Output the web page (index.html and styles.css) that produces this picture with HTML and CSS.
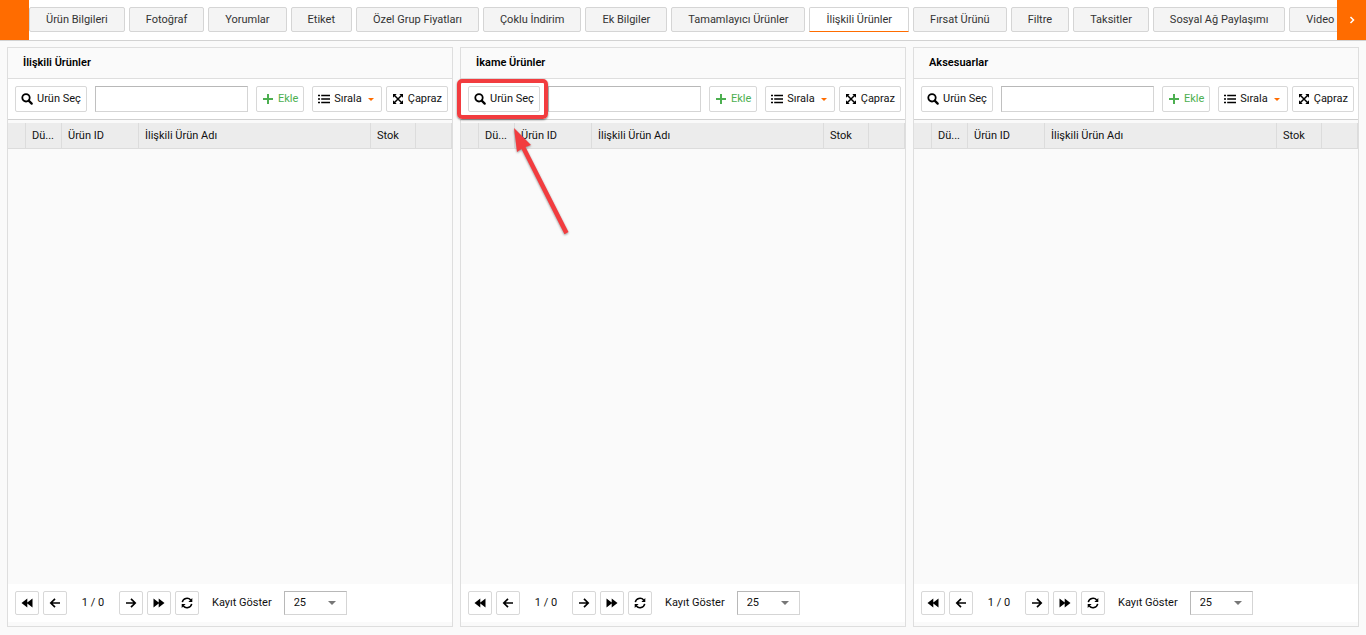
FILE: index.html
```html
<!DOCTYPE html>
<html lang="tr">
<head>
<meta charset="utf-8">
<meta name="viewport" content="width=device-width, initial-scale=1">
<title>İlişkili Ürünler</title>
<link rel="stylesheet" href="styles.css">
</head>
<body>
<svg class="sprite" aria-hidden="true">
  <symbol id="i-search" viewBox="0 0 12 12"><circle cx="5" cy="4.800" r="3.700" fill="none" stroke="currentColor" stroke-width="1.800"/><path d="M7.700 7.600l3 3" stroke="currentColor" stroke-width="2.200" stroke-linecap="round"/></symbol>
  <symbol id="i-plus" viewBox="0 0 12 12"><path d="M6 1v10M1 6h10" stroke="currentColor" stroke-width="2"/></symbol>
  <symbol id="i-list" viewBox="0 0 12 12"><path d="M0 2.500h2M0 6h2M0 9.500h2M3.200 2.500H12M3.200 6H12M3.200 9.500H12" stroke="currentColor" stroke-width="1.500"/></symbol>
  <symbol id="i-cross" viewBox="0 0 12 12"><path d="M2 2l8 8M10 2l-8 8" stroke="currentColor" stroke-width="1.500"/><path d="M1 1h3.700L1 4.700zM11 1v3.700L7.300 1zM1 11V7.300L4.700 11zM11 11H7.300L11 7.300z" fill="currentColor"/></symbol>
  <symbol id="i-caret" viewBox="0 0 8 4"><path d="M0 0h8L4 4z" fill="currentColor"/></symbol>
  <symbol id="i-first" viewBox="0 0 12 12"><path d="M6.300 1.600v8.800L.5 6zM11.500 1.600v8.800L5.700 6z" fill="currentColor"/></symbol>
  <symbol id="i-last" viewBox="0 0 12 12"><path d="M5.700 1.600v8.800L11.500 6zM.5 1.600v8.800L6.300 6z" fill="currentColor"/></symbol>
  <symbol id="i-prev" viewBox="0 0 12 12"><path d="M11 6H2M6 1.800L1.800 6 6 10.200" fill="none" stroke="currentColor" stroke-width="1.700"/></symbol>
  <symbol id="i-next" viewBox="0 0 12 12"><path d="M1 6h9M6 1.800L10.200 6 6 10.200" fill="none" stroke="currentColor" stroke-width="1.700"/></symbol>
  <symbol id="i-refresh" viewBox="0 0 12 12"><path d="M1.300 5.200a4.800 4.800 0 0 1 8.400-2.100M10.700 6.800a4.800 4.800 0 0 1-8.400 2.100" fill="none" stroke="currentColor" stroke-width="1.500"/><path d="M11.300 1v3.900H7.400zM.7 11V7.100h3.900z" fill="currentColor"/></symbol>
  <symbol id="i-chevron" viewBox="0 0 8 8"><path d="M2.500 1l3 3-3 3" fill="none" stroke="currentColor" stroke-width="1.500"/></symbol>
</svg>

<nav class="tabbar" aria-label="Ürün sekmeleri">
  <button class="scroll" type="button" aria-label="Önceki sekmeler"></button>
  <div class="tabs">
    <button class="tab" type="button">Ürün Bilgileri</button>
    <button class="tab" type="button">Fotoğraf</button>
    <button class="tab" type="button">Yorumlar</button>
    <button class="tab" type="button">Etiket</button>
    <button class="tab" type="button">Özel Grup Fiyatları</button>
    <button class="tab" type="button">Çoklu İndirim</button>
    <button class="tab" type="button">Ek Bilgiler</button>
    <button class="tab" type="button">Tamamlayıcı Ürünler</button>
    <button class="tab active" type="button">İlişkili Ürünler</button>
    <button class="tab" type="button">Fırsat Ürünü</button>
    <button class="tab" type="button">Filtre</button>
    <button class="tab" type="button">Taksitler</button>
    <button class="tab" type="button">Sosyal Ağ Paylaşımı</button>
    <button class="tab" type="button">Video</button>
  </div>
  <button class="scroll" type="button" aria-label="Sonraki sekmeler"><svg class="chevron"><use href="#i-chevron"/></svg></button>
</nav>

<main class="panels">
  <section class="panel">
    <h2 class="title">İlişkili Ürünler</h2>
    <div class="toolbar">
      <button class="btn" type="button"><svg class="icon"><use href="#i-search"/></svg>Urün Seç</button>
      <input class="field" type="text" aria-label="Ürün">
      <button class="btn add" type="button"><svg class="icon"><use href="#i-plus"/></svg>Ekle</button>
      <div class="group">
        <button class="btn" type="button"><svg class="icon"><use href="#i-list"/></svg>Sırala<svg class="caret"><use href="#i-caret"/></svg></button>
        <button class="btn" type="button"><svg class="icon"><use href="#i-cross"/></svg>Çapraz</button>
      </div>
    </div>
    <table class="grid">
      <colgroup><col class="c-mark"><col class="c-edit"><col class="c-id"><col><col class="c-stock"><col class="c-end"></colgroup>
      <thead><tr><th></th><th>Dü...</th><th>Ürün ID</th><th>İlişkili Ürün Adı</th><th>Stok</th><th></th></tr></thead>
    </table>
    <div class="pager">
      <button class="page" type="button" aria-label="İlk"><svg class="icon"><use href="#i-first"/></svg></button>
      <button class="page" type="button" aria-label="Önceki"><svg class="icon"><use href="#i-prev"/></svg></button>
      <span class="count">1 / 0</span>
      <button class="page" type="button" aria-label="Sonraki"><svg class="icon"><use href="#i-next"/></svg></button>
      <button class="page" type="button" aria-label="Son"><svg class="icon"><use href="#i-last"/></svg></button>
      <button class="page" type="button" aria-label="Yenile"><svg class="icon"><use href="#i-refresh"/></svg></button>
      <label class="size-label" for="size1">Kayıt Göster</label>
      <div class="size"><select id="size1"><option>25</option></select><svg class="arrow"><use href="#i-caret"/></svg></div>
    </div>
  </section>

  <section class="panel">
    <h2 class="title">İkame Ürünler</h2>
    <div class="toolbar">
      <button class="btn" type="button"><svg class="icon"><use href="#i-search"/></svg>Urün Seç</button>
      <input class="field" type="text" aria-label="Ürün">
      <button class="btn add" type="button"><svg class="icon"><use href="#i-plus"/></svg>Ekle</button>
      <div class="group">
        <button class="btn" type="button"><svg class="icon"><use href="#i-list"/></svg>Sırala<svg class="caret"><use href="#i-caret"/></svg></button>
        <button class="btn" type="button"><svg class="icon"><use href="#i-cross"/></svg>Çapraz</button>
      </div>
    </div>
    <table class="grid">
      <colgroup><col class="c-mark"><col class="c-edit"><col class="c-id"><col><col class="c-stock"><col class="c-end"></colgroup>
      <thead><tr><th></th><th>Dü...</th><th>Ürün ID</th><th>İlişkili Ürün Adı</th><th>Stok</th><th></th></tr></thead>
    </table>
    <div class="pager">
      <button class="page" type="button" aria-label="İlk"><svg class="icon"><use href="#i-first"/></svg></button>
      <button class="page" type="button" aria-label="Önceki"><svg class="icon"><use href="#i-prev"/></svg></button>
      <span class="count">1 / 0</span>
      <button class="page" type="button" aria-label="Sonraki"><svg class="icon"><use href="#i-next"/></svg></button>
      <button class="page" type="button" aria-label="Son"><svg class="icon"><use href="#i-last"/></svg></button>
      <button class="page" type="button" aria-label="Yenile"><svg class="icon"><use href="#i-refresh"/></svg></button>
      <label class="size-label" for="size2">Kayıt Göster</label>
      <div class="size"><select id="size2"><option>25</option></select><svg class="arrow"><use href="#i-caret"/></svg></div>
    </div>
    <div class="highlight"></div>
    <svg class="pointer" viewBox="0 0 60 112" aria-hidden="true"><path d="M2 1l17 17-5.500 2 43 85-4 2.200L9.500 22 5 25z" fill="#f23c3f"/></svg>
  </section>

  <section class="panel">
    <h2 class="title">Aksesuarlar</h2>
    <div class="toolbar">
      <button class="btn" type="button"><svg class="icon"><use href="#i-search"/></svg>Urün Seç</button>
      <input class="field" type="text" aria-label="Ürün">
      <button class="btn add" type="button"><svg class="icon"><use href="#i-plus"/></svg>Ekle</button>
      <div class="group">
        <button class="btn" type="button"><svg class="icon"><use href="#i-list"/></svg>Sırala<svg class="caret"><use href="#i-caret"/></svg></button>
        <button class="btn" type="button"><svg class="icon"><use href="#i-cross"/></svg>Çapraz</button>
      </div>
    </div>
    <table class="grid">
      <colgroup><col class="c-mark"><col class="c-edit"><col class="c-id"><col><col class="c-stock"><col class="c-end"></colgroup>
      <thead><tr><th></th><th>Dü...</th><th>Ürün ID</th><th>İlişkili Ürün Adı</th><th>Stok</th><th></th></tr></thead>
    </table>
    <div class="pager">
      <button class="page" type="button" aria-label="İlk"><svg class="icon"><use href="#i-first"/></svg></button>
      <button class="page" type="button" aria-label="Önceki"><svg class="icon"><use href="#i-prev"/></svg></button>
      <span class="count">1 / 0</span>
      <button class="page" type="button" aria-label="Sonraki"><svg class="icon"><use href="#i-next"/></svg></button>
      <button class="page" type="button" aria-label="Son"><svg class="icon"><use href="#i-last"/></svg></button>
      <button class="page" type="button" aria-label="Yenile"><svg class="icon"><use href="#i-refresh"/></svg></button>
      <label class="size-label" for="size3">Kayıt Göster</label>
      <div class="size"><select id="size3"><option>25</option></select><svg class="arrow"><use href="#i-caret"/></svg></div>
    </div>
  </section>
</main>
</body>
</html>
```

FILE: styles.css
```css
* { box-sizing: border-box; }
body {
  margin: 0;
  min-height: 100vh;
  display: flex;
  flex-direction: column;
  background: #fafafa;
  color: #111;
  font: 11px/16px Roboto, "Open Sans", sans-serif;
}
button, input, select { font: inherit; color: inherit; margin: 0; }
.sprite { display: none; }

.tabbar {
  display: flex;
  height: 41px;
  background: #fff;
  border-bottom: 1px solid #d2d2d2;
}
.scroll {
  flex: none;
  width: 29px;
  padding: 0;
  border: 0;
  background: #ff6c00;
  color: #fff;
  display: flex;
  align-items: center;
  justify-content: center;
}
.chevron { width: 8px; height: 8px; }
.tabs {
  flex: 1;
  min-width: 0;
  overflow: hidden;
  display: flex;
  align-items: flex-start;
  gap: 4px;
  padding-top: 7px;
}
.tab {
  flex: none;
  height: 25px;
  padding: 0 16px;
  border: 1px solid #d5d5d5;
  border-radius: 2px;
  background: #f4f4f4;
  color: #333;
}
.tab.active {
  background: #fff;
  border-bottom-color: #ff6c00;
  border-radius: 2px 2px 0 0;
}

.panels {
  flex: 1;
  display: grid;
  grid-template-columns: repeat(3, minmax(0, 1fr));
  gap: 7px;
  padding: 6px 7px 8px;
}
.panel {
  position: relative;
  display: flex;
  flex-direction: column;
  border: 1px solid #dedede;
  padding-bottom: 4px;
}
.title {
  margin: 0;
  height: 31px;
  padding: 7px 15px;
  border-bottom: 1px solid #dedede;
  font-size: 11px;
  line-height: 16px;
  font-weight: 600;
  color: #000;
}
.toolbar {
  display: flex;
  align-items: center;
  gap: 8px;
  height: 41px;
  padding: 0 4px 0 7px;
  background: #fff;
  border-bottom: 1px solid #d0d0d0;
}
.group { display: flex; gap: 4px; }
.btn {
  flex: none;
  display: flex;
  align-items: center;
  height: 26px;
  padding: 0 5px;
  border: 1px solid #d8d8d8;
  border-radius: 2px;
  background: #fff;
}
.icon { flex: none; width: 12px; height: 12px; color: #000; }
.btn .icon { margin-right: 4px; }
.add, .add .icon { color: #4caf50; }
.caret { width: 6px; height: 3px; margin: 0 2px 0 6px; color: #ff6c00; }
.field {
  flex: 1;
  min-width: 0;
  height: 26px;
  padding: 0 6px;
  border: 1px solid #d5d5d5;
  border-top-color: #b8b8b8;
  border-left-color: #c0c0c0;
  border-radius: 0;
  background: #fff;
}

.grid {
  width: 100%;
  margin-top: 3px;
  table-layout: fixed;
  border-collapse: separate;
  border-spacing: 0;
}
.c-mark { width: 18px; }
.c-edit { width: 36px; }
.c-id { width: 77px; }
.c-stock { width: 45px; }
.c-end { width: 36px; }
.grid th {
  height: 26px;
  padding: 0 0 0 6px;
  border-right: 1px solid #dcdcdc;
  border-bottom: 1px solid #dcdcdc;
  background: #ececec;
  font-weight: 400;
  text-align: left;
  white-space: nowrap;
}

.pager {
  margin-top: auto;
  display: flex;
  align-items: center;
  gap: 4px;
  height: 38px;
  padding: 0 7px;
  background: #fff;
}
.page {
  width: 24px;
  height: 24px;
  padding: 0;
  border: 1px solid #d8d8d8;
  border-radius: 2px;
  background: #fff;
  display: flex;
  align-items: center;
  justify-content: center;
}
.count { width: 44px; text-align: center; }
.size-label { padding: 0 8px 0 9px; }
.size { position: relative; }
.size select {
  display: block;
  width: 63px;
  height: 24px;
  padding: 0 9px;
  appearance: none;
  border: 1px solid #d5d5d5;
  border-top-color: #b8b8b8;
  border-left-color: #b8b8b8;
  border-radius: 0;
  background: #fff;
}
.arrow {
  position: absolute;
  right: 11px;
  top: 10px;
  width: 8px;
  height: 4px;
  color: #777;
  pointer-events: none;
}

.highlight {
  position: absolute;
  left: -4px;
  top: 31px;
  width: 91px;
  height: 40px;
  border: 4px solid #f23c3f;
  border-radius: 5px;
  box-shadow: 0 1px 2px rgba(0, 0, 0, .5);
  pointer-events: none;
}
.pointer {
  position: absolute;
  left: 51px;
  top: 79px;
  width: 60px;
  height: 112px;
  filter: drop-shadow(0 1px 1px rgba(0, 0, 0, .4));
  pointer-events: none;
}
```
